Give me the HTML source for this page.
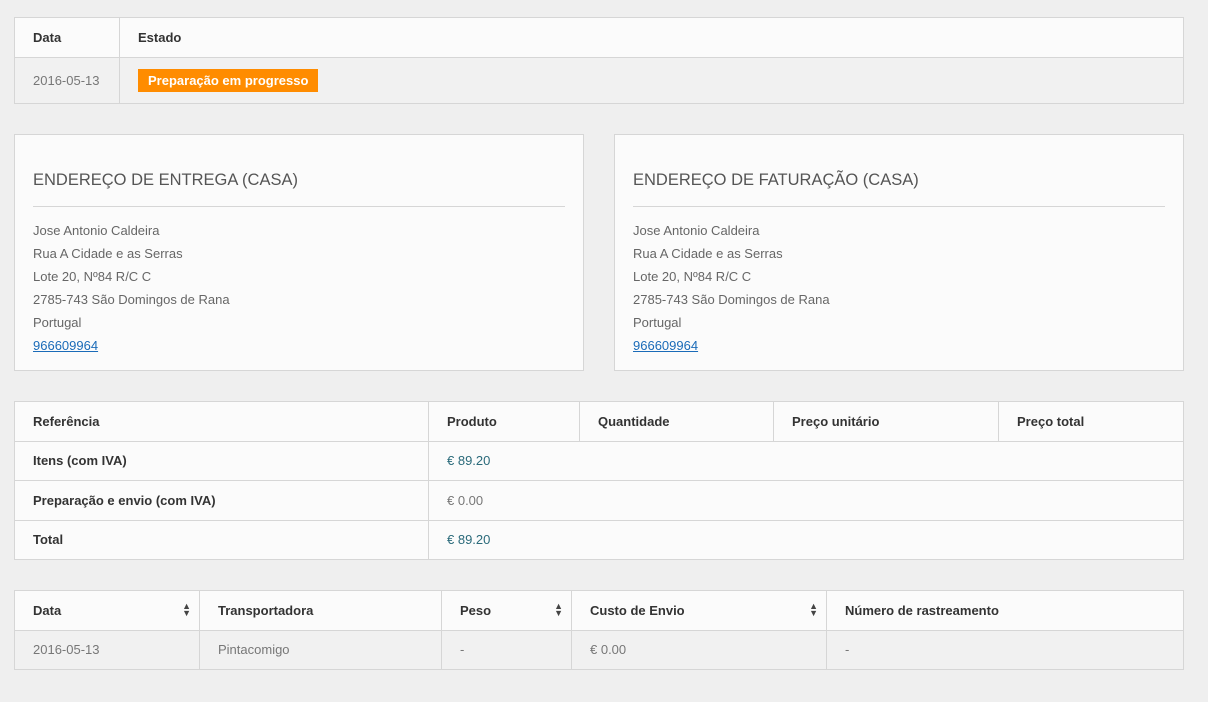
<!DOCTYPE html>
<html><head><meta charset="utf-8"><style>
body{margin:0;width:1208px;height:702px;background:#efefef;font-family:"Liberation Sans",Arial,sans-serif;font-size:13px;color:#555;position:relative;overflow:hidden}
table{position:absolute;border-collapse:collapse;background:#fbfbfb;table-layout:fixed}
td,th{border:1px solid #d6d6d6;padding:0 0 1px 18px;text-align:left;white-space:nowrap}
th{color:#333;font-weight:bold;background:#fbfbfb}
.g td{background:#f1f1f1;color:#777}
.box{position:absolute;top:134px;width:568px;height:235px;background:#fbfbfb;border:1px solid #d6d6d6}
.box h3{margin:0;position:absolute;left:18px;top:36px;font-size:16.5px;font-weight:normal;color:#555}
.box hr{position:absolute;left:18px;right:18px;top:71px;margin:0;border:0;border-top:1px solid #d6d6d6}
.box .a{position:absolute;left:18px;top:84px;line-height:23px;color:#666}
.box a{color:#1a6bb8}
.badge{background:#ff8c00;color:#fff;font-weight:bold;padding:4px 10px;display:inline-block}
.s{float:right;margin-right:8px;font-size:9px;color:#444;line-height:7px}
.b{color:#2a6a7a}
</style></head><body>
<table style="left:14px;top:17px;width:1170px">
<colgroup><col style="width:105px"><col></colgroup>
<tr style="height:40px"><th>Data</th><th>Estado</th></tr>
<tr class="g" style="height:46px"><td>2016-05-13</td><td><span class="badge">Preparação em progresso</span></td></tr>
</table>
<div class="box" style="left:14px"><h3>ENDEREÇO DE ENTREGA (CASA)</h3><hr><div class="a">Jose Antonio Caldeira<br>Rua A Cidade e as Serras<br>Lote 20, Nº84 R/C C<br>2785-743 São Domingos de Rana<br>Portugal<br><a href="#">966609964</a></div></div>
<div class="box" style="left:614px"><h3>ENDEREÇO DE FATURAÇÃO (CASA)</h3><hr><div class="a">Jose Antonio Caldeira<br>Rua A Cidade e as Serras<br>Lote 20, Nº84 R/C C<br>2785-743 São Domingos de Rana<br>Portugal<br><a href="#">966609964</a></div></div>
<table style="left:14px;top:401px;width:1170px">
<colgroup><col style="width:414px"><col style="width:151px"><col style="width:194px"><col style="width:225px"><col></colgroup>
<tr style="height:40px"><th>Referência</th><th>Produto</th><th>Quantidade</th><th>Preço unitário</th><th>Preço total</th></tr>
<tr style="height:39px"><th>Itens (com IVA)</th><td colspan="4" class="b">€ 89.20</td></tr>
<tr style="height:40px"><th>Preparação e envio (com IVA)</th><td colspan="4" style="color:#777">€ 0.00</td></tr>
<tr style="height:39px"><th>Total</th><td colspan="4" class="b">€ 89.20</td></tr>
</table>
<table style="left:14px;top:590px;width:1170px">
<colgroup><col style="width:185px"><col style="width:242px"><col style="width:130px"><col style="width:255px"><col></colgroup>
<tr style="height:40px"><th>Data<span class="s">▲<br>▼</span></th><th>Transportadora</th><th>Peso<span class="s">▲<br>▼</span></th><th>Custo de Envio<span class="s">▲<br>▼</span></th><th>Número de rastreamento</th></tr>
<tr class="g" style="height:39px"><td>2016-05-13</td><td>Pintacomigo</td><td>-</td><td>€ 0.00</td><td>-</td></tr>
</table>
</body></html>
